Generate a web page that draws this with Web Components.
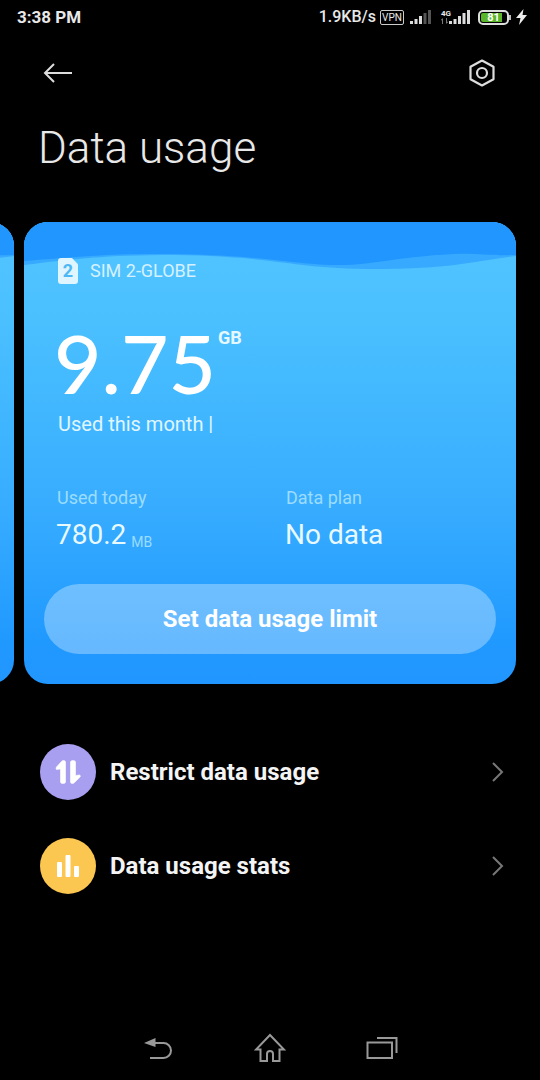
<!DOCTYPE html>
<html lang="en">
<head>
<meta charset="utf-8">
<meta name="viewport" content="width=device-width, initial-scale=1">
<title>Data usage</title>
<style>
  html, body { margin: 0; height: 100%; background: #000; }
  body { font-family: Roboto, "Liberation Sans", sans-serif; color: #fff; }
</style>
</head>
<body>
<data-usage-screen></data-usage-screen>

<script>
function define(name, html, setup) {
  const template = document.createElement('template');
  template.innerHTML = html;
  customElements.define(name, class extends HTMLElement {
    constructor() {
      super();
      this.attachShadow({ mode: 'open' }).append(template.content.cloneNode(true));
    }
    connectedCallback() { if (setup) setup(this, this.shadowRoot); }
  });
}

define('status-bar', `
  <style>
    :host { display: flex; align-items: center; justify-content: space-between; height: 34px; padding: 0 13px 0 17px; color: #e8e8e8; font-weight: 500; }
    svg { display: block; }
    time { font-size: 17px; line-height: 20px; font-weight: 700; }
    .tray { display: flex; align-items: center; }
    .speed { font-size: 16px; line-height: 20px; margin-right: 4px; }
    .vpn { box-sizing: border-box; width: 24px; height: 15px; border: 1px solid #ccc; border-radius: 2px; font-size: 10px; line-height: 13px; text-align: center; font-weight: 400; margin-right: 6px; }
    .sim2 { display: flex; align-items: flex-end; margin: 0 8px 0 10px; }
    .net { display: grid; justify-items: start; width: 8px; font-size: 8px; line-height: 8px; font-weight: 700; }
    .battery { display: flex; align-items: center; margin-right: 5px; }
    .cell { box-sizing: border-box; width: 31px; height: 15px; border: 2px solid #ddd; border-radius: 5px; padding: 1px; }
    .level { display: block; height: 9px; border-radius: 2px; background: linear-gradient(90deg, #5bb52a 82%, transparent 82%); font-size: 11px; line-height: 10px; font-weight: 700; text-align: center; color: #fff; }
    .tip { width: 2px; height: 5px; background: #bbb; }
  </style>
  <time>3:38 PM</time>
  <div class="tray">
    <span class="speed">1.9KB/s</span>
    <span class="vpn">VPN</span>
    <svg width="21" height="14" viewBox="0 0 21 14"><path fill="#ddd" d="M0 11h3v3H0zM4.500 9h3v5h-3zM9 6h3v8H9z"/><path fill="#555" d="M13.500 3h3v11h-3zM18 0h3v14h-3z"/></svg>
    <div class="sim2">
      <span class="net">4G
        <svg width="7" height="6" viewBox="0 0 7 6"><path stroke="#777" fill="none" d="M1.500 6V1M0 2.500l1.500-2M5.500 0v5M7 3.500l-1.500 2"/></svg>
      </span>
      <svg width="21" height="14" viewBox="0 0 21 14"><path fill="#ddd" d="M0 11h3v3H0zM4.500 9h3v5h-3zM9 6h3v8H9zM13.500 3h3v11h-3zM18 0h3v14h-3z"/></svg>
    </div>
    <div class="battery"><div class="cell"><span class="level">81</span></div><span class="tip"></span></div>
    <svg width="11" height="16" viewBox="0 0 11 16"><path fill="#eee" d="M7.500 0 0 9h4.500L3 16l8-10H6.500z"/></svg>
  </div>
`);

define('app-header', `
  <style>
    :host { display: block; padding: 16px 38px 0; }
    .bar { display: flex; justify-content: space-between; }
    button { display: grid; place-items: center; width: 40px; height: 46px; padding: 0; border: 0; background: none; }
    svg { display: block; }
    h1 { margin: 22px 0 0; font-size: 44px; line-height: 60px; font-weight: 300; color: #e8e8e8; }
  </style>
  <div class="bar">
    <button aria-label="Back"><svg width="30" height="22" viewBox="0 0 30 22" fill="none" stroke="#ddd" stroke-width="2"><path d="M29 11H2M11 2 2 11l9 9"/></svg></button>
    <button aria-label="Settings"><svg width="28" height="28" viewBox="0 0 28 28" fill="none" stroke="#ddd" stroke-width="2.200" stroke-linejoin="round"><path d="M14 1.500 25.500 7.800V20.200L14 26.500 2.500 20.200V7.800z"/><circle cx="14" cy="14" r="5"/></svg></button>
  </div>
  <h1><slot></slot></h1>
`);

define('usage-card', `
  <style>
    :host { display: block; position: relative; flex: none; box-sizing: border-box; width: calc(100% - 24px); border-radius: 24px; overflow: hidden; padding: 34px 20px 30px; background: linear-gradient(#4fc3ff 40px, #4ac0ff 100px, #38adff 280px, #2099ff 420px, #2196ff); }
    .wave { position: absolute; top: 0; left: 0; width: 100%; height: 50px; }
    .content { position: relative; }
  </style>
  <svg class="wave" viewBox="0 0 492 50" preserveAspectRatio="none" aria-hidden="true">
    <path fill="#37aaff" d="M0 0H492V34C450 39 430 47 350 47C270 47 250 34 150 33C80 33 50 37 0 43z"/>
    <path fill="#2196ff" d="M0 0H492V33C465 34 455 31 430 32C370 35 350 43 316 43C270 43 240 32 130 32C75 32 40 36 0 39z"/>
  </svg>
  <div class="content"><slot></slot></div>
`);

define('sim-label', `
  <style>
    :host { display: flex; align-items: center; gap: 12px; padding-left: 14px; font-size: 18px; line-height: 30px; color: #d5f1ff; }
    .chip { width: 20px; height: 26px; border-radius: 3px; background: #dff5ff; clip-path: polygon(0 0, 70% 0, 100% 24%, 100% 100%, 0 100%); color: #4db8f5; font-weight: 700; line-height: 26px; text-align: center; }
  </style>
  <span class="chip">2</span><span><slot></slot></span>
`);

define('usage-total', `
  <style>
    :host { display: block; padding: 36px 0 0 10px; }
    .amount { display: flex; align-items: flex-start; gap: 2px; }
    .value { font: 500 82px/80px Lato, Roboto, sans-serif; }
    .unit { font-size: 18px; line-height: 22px; font-weight: 700; padding-top: 5px; color: #e6f8ff; }
    .note { padding: 10px 0 0 4px; font-size: 20px; line-height: 24px; color: #e0f6ff; }
  </style>
  <div class="amount"><span class="value">9.75</span><span class="unit">GB</span></div>
  <div class="note">Used this month |</div>
`);

define('usage-figure', `
  <style>
    :host { display: block; }
    .label { padding-left: 1px; font-size: 18px; line-height: 24px; color: #9cdcff; }
    .value { font-size: 28px; line-height: 34px; padding-top: 8px; color: #e8f9ff; }
    .unit { display: inline-block; font-size: 14px; line-height: 14px; margin-left: 5px; vertical-align: -3px; color: #9cdcff; }
  </style>
  <div class="label"></div>
  <div class="value"><slot></slot><span class="unit"></span></div>
`, (host, root) => {
  root.querySelector('.label').textContent = host.getAttribute('label');
  const unit = root.querySelector('.unit');
  if (!unit) return;
  if (host.hasAttribute('unit')) unit.textContent = host.getAttribute('unit');
  else unit.remove();
});

define('pill-button', `
  <style>
    :host { display: block; }
    button { display: block; width: 100%; height: 70px; padding: 0; border: 0; border-radius: 35px; background: rgba(255,255,255,.32); color: #fff; font: 700 24px/30px Roboto, sans-serif; }
  </style>
  <button><slot></slot></button>
`);

define('menu-row', `
  <style>
    :host { display: block; }
    a { display: flex; align-items: center; gap: 14px; height: 94px; padding: 0 36px 0 40px; color: #fff; text-decoration: none; }
    .icon { display: grid; place-items: center; flex: none; width: 56px; height: 56px; border-radius: 50%; background: var(--tint); }
    .text { flex: 1; font-size: 24px; line-height: 30px; font-weight: 700; color: #f4f4f4; }
    svg { display: block; }
  </style>
  <a href="#"><span class="icon"><slot name="icon"></slot></span><span class="text"><slot></slot></span>
    <svg width="12" height="20" viewBox="0 0 12 20" fill="none" stroke="#777" stroke-width="2"><path d="M1 1l9 9-9 9"/></svg></a>
`);

define('nav-bar', `
  <style>
    :host { display: grid; grid-template-columns: repeat(3, 112px); justify-content: center; height: 64px; margin-top: auto; }
    button { display: grid; place-items: center; padding: 0; border: 0; background: none; }
    svg { display: block; fill: none; stroke: #999; stroke-width: 2; }
  </style>
  <button aria-label="Back"><svg width="30" height="26" viewBox="0 0 30 26"><path d="M10 8H20.500a7.500 7.500 0 0 1 0 15H7"/><path fill="#999" stroke="none" d="M1 8 12.500 3v9z"/></svg></button>
  <button aria-label="Home"><svg width="32" height="30" viewBox="0 0 32 30"><path d="M16 2 2 16.500H6.500V28H13V21a3 3 0 0 1 6 0v7h6.500V16.500H30z"/></svg></button>
  <button aria-label="Recent apps"><svg width="32" height="24" viewBox="0 0 32 24"><path d="M1.500 6.500H26V22H1.500zM11 2H30.500V17"/></svg></button>
`);

define('data-usage-screen', `
  <style>
    :host { display: flex; flex-direction: column; min-height: 100vh; }
    .cards { display: flex; justify-content: flex-end; gap: 10px; padding-right: 24px; margin-top: 44px; overflow: hidden; }
    .figures { display: grid; grid-template-columns: 1fr 1fr; padding: 50px 4px 32px 12px; column-gap: 22px; }
    nav { padding-top: 41px; }
    svg { display: block; }
  </style>
  <status-bar></status-bar>
  <app-header>Data usage</app-header>
  <main>
    <section class="cards">
      <usage-card aria-hidden="true"></usage-card>
      <usage-card>
        <sim-label>SIM 2-GLOBE</sim-label>
        <usage-total></usage-total>
        <div class="figures">
          <usage-figure label="Used today" unit="MB">780.2</usage-figure>
          <usage-figure label="Data plan">No data</usage-figure>
        </div>
        <pill-button>Set data usage limit</pill-button>
      </usage-card>
    </section>
    <nav>
      <menu-row style="--tint:#a99ff0">
        <svg slot="icon" width="28" height="24" viewBox="0 0 28 24" fill="#fff" stroke="#fff" stroke-width=".6"><path d="M7.500 1.500Q8 .5 9.500 .5 11.500 .5 11.500 2V22Q11.500 23.500 9 23.500T6.500 22V9L2.500 9.500Q1.500 8.500 2.500 7z"/><path d="M20.500 22.500Q20 23.500 18.500 23.500 16.500 23.500 16.500 22V2Q16.500 .5 19 .5T21.500 2V15.500L25.500 15Q27 15.500 26 17z"/></svg>
        Restrict data usage
      </menu-row>
      <menu-row style="--tint:#fbc750">
        <svg slot="icon" width="24" height="24" viewBox="0 0 24 24" fill="#fff"><rect x="1" y="8" width="5" height="15" rx="1"/><rect x="9.500" y="1" width="5" height="22" rx="1"/><rect x="18" y="12" width="5" height="11" rx="1"/></svg>
        Data usage stats
      </menu-row>
    </nav>
  </main>
  <nav-bar></nav-bar>
`);
</script>
</body>
</html>
